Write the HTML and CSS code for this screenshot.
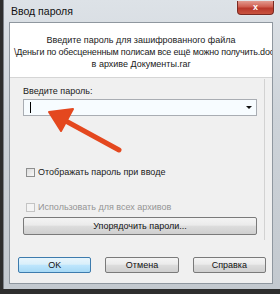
FILE: index.html
```html
<!DOCTYPE html>
<html lang="ru">
<head>
<meta charset="utf-8">
<title>Ввод пароля</title>
<link rel="stylesheet" href="styles.css">
</head>
<body>
<div class="window">
  <div class="titlebar">
    <span class="title">Ввод пароля</span>
    <div class="close">x</div>
  </div>
  <div class="client">
    <div class="header">
      <div class="hline">Введите пароль для зашифрованного файла</div>
      <div class="hline hwide">\Деньги по обесцененным полисам все ещё можно получить.doc</div>
      <div class="hline">в архиве Документы.rar</div>
    </div>
    <div class="panel">
      <div class="label">Введите пароль:</div>
      <div class="combo"><span class="caret"></span><span class="drop"></span></div>
      <div class="check first"><span class="box"></span><span>Отображать пароль при вводе</span></div>
      <div class="check disabled"><span class="box"></span><span>Использовать для всех архивов</span></div>
      <div class="btn organize">Упорядочить пароли...</div>
    </div>
    <div class="buttons">
      <div class="btn default">OK</div>
      <div class="btn">Отмена</div>
      <div class="btn">Справка</div>
    </div>
  </div>
</div>
<svg class="arrow" width="280" height="294" viewBox="0 0 280 294">
  <line x1="64" y1="120" x2="119" y2="150" stroke="#e4481f" stroke-width="5" stroke-linecap="round"/>
  <polygon points="49,112 73,109 61,131" fill="#e4481f" stroke="#e4481f" stroke-width="2" stroke-linejoin="round"/>
</svg>
</body>
</html>
```

FILE: styles.css
```css
html, body {
  margin: 0;
  padding: 0;
}
body {
  width: 280px;
  height: 294px;
  background: #2e2e2e;
  font-family: "Liberation Sans", Arial, sans-serif;
  font-size: 9px;
  color: #1a1a1a;
  overflow: hidden;
  position: relative;
}
.window {
  margin-left: 3px;
  width: 277px;
  height: 289px;
  box-sizing: border-box;
  padding: 0 7px 5px 5px;
  background: linear-gradient(#dde2e7, #cdd3d9 40%, #c3c9cf);
  border-left: 1px solid #7d8289;
  display: flex;
  flex-direction: column;
}
.titlebar {
  height: 22px;
  display: flex;
  align-items: flex-start;
  justify-content: space-between;
  flex-shrink: 0;
}
.title {
  margin-top: 5px;
  margin-left: 2px;
  font-size: 10.5px;
  color: #111;
}
.close {
  width: 37px;
  height: 14px;
  margin-top: 1px;
  margin-right: -1px;
  box-sizing: border-box;
  border: 1px solid #7a2a22;
  border-top: none;
  border-radius: 0 0 4px 4px;
  background: linear-gradient(#e29a8f, #cf5d4f 45%, #b8382b 55%, #c9533f);
  color: #fff;
  font-weight: bold;
  font-size: 9px;
  text-align: center;
  line-height: 12px;
  box-shadow: 0 0 2px rgba(255,255,255,0.7);
}
.client {
  flex: 1;
  background: #f0f0f0;
  border: 1px solid #8f979f;
  display: flex;
  flex-direction: column;
}
.header {
  background: #fff;
  height: 55px;
  box-sizing: border-box;
  padding-top: 11px;
  border-bottom: 1px solid #d5d5d5;
  overflow: hidden;
}
.hline {
  line-height: 12px;
  text-align: center;
  white-space: nowrap;
}
.hwide {
  text-align: left;
  padding-left: 4px;
  letter-spacing: -0.18px;
}
.panel {
  margin: 1px 7px 0 5px;
  padding: 6px 7px 5px 8px;
  border-right: 1px solid #d2d2d2;
  display: flex;
  flex-direction: column;
}
.label {
  line-height: 12px;
  margin-bottom: 2px;
}
.combo {
  height: 17px;
  box-sizing: border-box;
  border: 1px solid #a9adb3;
  background: #f7fcff;
  position: relative;
  display: flex;
  align-items: center;
  justify-content: space-between;
  padding: 0 4px 0 6px;
}
.caret {
  width: 1px;
  height: 11px;
  background: #000;
}
.drop {
  width: 0;
  height: 0;
  border-left: 3px solid transparent;
  border-right: 3px solid transparent;
  border-top: 3px solid #111;
}
.check {
  display: flex;
  align-items: center;
  gap: 3px;
  line-height: 12px;
  padding-left: 3px;
}
.check.first {
  margin-top: 50px;
}
.check.disabled {
  margin-top: 23px;
  color: #959595;
}
.box {
  width: 9px;
  height: 9px;
  box-sizing: border-box;
  border: 1px solid #8e8f8f;
  background: linear-gradient(135deg, #dcdcdc, #f8f8f8);
}
.disabled .box {
  border-color: #c4c4c4;
  background: #f4f4f4;
}
.btn {
  height: 16px;
  box-sizing: border-box;
  border: 1px solid #7a7a7a;
  border-radius: 2px;
  background: linear-gradient(#f4f4f4, #ebebeb 45%, #dddddd 50%, #cfcfcf);
  display: flex;
  align-items: center;
  justify-content: center;
  color: #111;
}
.organize {
  margin-top: 4px;
  height: 18px;
}
.buttons {
  display: flex;
  gap: 14px;
  padding: 17px 6px 0 8px;
}
.buttons .btn {
  width: 74px;
}
.btn.default {
  border-color: #3d7bad;
  background: linear-gradient(#e8f5fc, #d9effa 45%, #bee6fd 50%, #a7d9f5);
}
.arrow {
  position: absolute;
  left: 0;
  top: 0;
  pointer-events: none;
}
```
